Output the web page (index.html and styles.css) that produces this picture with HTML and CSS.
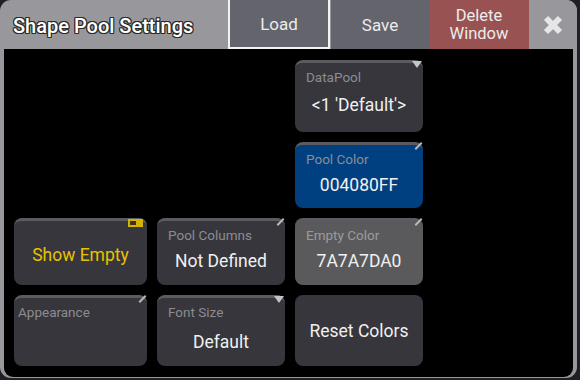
FILE: index.html
```html
<!DOCTYPE html>
<html lang="en">
<head>
    <meta charset="UTF-8">
    <title>Shape Pool Settings</title>
    <link rel="stylesheet" href="styles.css">
</head>
<body>
    <div class="window">
        <div class="titlebar">
            <div class="title">Shape Pool Settings</div>
            <button class="tb-btn load">Load</button>
            <button class="tb-btn save">Save</button>
            <button class="tb-btn delete">Delete<br>Window</button>
            <button class="tb-btn close">
                <svg width="24" height="24" viewBox="0 0 24 24">
                    <path d="M5 5 L19 19 M19 5 L5 19" stroke="#e6e6e6" stroke-width="6"/>
                </svg>
            </button>
        </div>

        <div class="content">
            <div class="grid">
                <div class="panel datapool">
                    <span class="mark tri"></span>
                    <div class="label">DataPool</div>
                    <div class="value">&lt;1 'Default'&gt;</div>
                </div>

                <div class="panel poolcolor">
                    <span class="mark pen"></span>
                    <div class="label">Pool Color</div>
                    <div class="value">004080FF</div>
                </div>

                <div class="panel showempty">
                    <span class="toggle"><span class="knob"></span></span>
                    <div class="big-yellow">Show Empty</div>
                </div>
                <div class="panel poolcolumns">
                    <span class="mark pen"></span>
                    <div class="label">Pool Columns</div>
                    <div class="value">Not Defined</div>
                </div>
                <div class="panel emptycolor">
                    <span class="mark pen"></span>
                    <div class="label">Empty Color</div>
                    <div class="value">7A7A7DA0</div>
                </div>

                <div class="panel appearance">
                    <span class="mark pen"></span>
                    <div class="label">Appearance</div>
                </div>
                <div class="panel fontsize">
                    <span class="mark tri"></span>
                    <div class="label">Font Size</div>
                    <div class="value">Default</div>
                </div>
                <div class="panel plain reset">
                    <div class="center">Reset Colors</div>
                </div>
            </div>
        </div>
    </div>
</body>
</html>
```

FILE: styles.css
```css
:root {
    --frame: #98989c;
    --btn: #63646c;
    --panel: #36363c;
    --strip: #5c5c60;
    --label: #8c8c92;
    --value: #f0f0f0;
}

body {
    margin: 0;
    background: #1e2026;
    font-family: Roboto, "Liberation Sans", sans-serif;
}

.window {
    width: 577px;
    height: 378px;
    background: var(--frame);
    border-radius: 11px;
    display: flex;
    flex-direction: column;
    overflow: hidden;
}

.titlebar {
    height: 49px;
    display: flex;
    align-items: stretch;
    flex-shrink: 0;
}

.title {
    flex: 1;
    padding-left: 13px;
    padding-top: 2px;
    display: flex;
    align-items: center;
    font-size: 20px;
    font-weight: 500;
    color: #ffffff;
    text-shadow: -1px -1px 0 #2a2a2a, 1px -1px 0 #2a2a2a, -1px 1px 0 #2a2a2a, 1px 1px 0 #2a2a2a,
                 0 1px 0 #2a2a2a, 0 -1px 0 #2a2a2a, 1px 0 0 #2a2a2a, -1px 0 0 #2a2a2a;
}

.tb-btn {
    border: none;
    margin: 0;
    padding: 0;
    font-family: inherit;
    color: #ececec;
    font-size: 17px;
    background: var(--btn);
}

.load {
    width: 102px;
    border: 2px solid #f2f2f2;
    border-top: none;
    margin-right: 1px;
}

.save {
    width: 98px;
}

.delete {
    width: 100px;
    background: #985252;
    font-size: 16.5px;
    line-height: 18px;
    padding-top: 1px;
}

.close {
    width: 48px;
    background: var(--frame);
    display: flex;
    align-items: center;
    justify-content: center;
}

.content {
    flex: 1;
    background: #000000;
    margin: 0 4px 3px 4px;
    border-radius: 0 0 9px 9px;
    padding: 11px 10px;
}

.grid {
    display: grid;
    grid-template-columns: 133px 128px 128px;
    grid-template-rows: 72px 66px 67px 71px;
    gap: 10px;
}

.panel {
    position: relative;
    background: var(--panel);
    border-radius: 8px;
    border-top: 3px solid var(--strip);
    box-sizing: border-box;
    display: flex;
    flex-direction: column;
    align-items: center;
}

.datapool {
    grid-column: 3;
    grid-row: 1;
}

.poolcolor {
    grid-column: 3;
    grid-row: 2;
    background: #004080;
}

.showempty {
    grid-column: 1;
    grid-row: 3;
    justify-content: center;
}

.poolcolumns {
    grid-column: 2;
    grid-row: 3;
}

.emptycolor {
    grid-column: 3;
    grid-row: 3;
    background: #5a5a5c;
}

.emptycolor .label {
    color: #9a9a9c;
}

.appearance {
    grid-column: 1;
    grid-row: 4;
    align-items: flex-start;
}

.appearance .label {
    padding-left: 4px;
}

.fontsize {
    grid-column: 2;
    grid-row: 4;
}

.fontsize .value {
    margin-top: 12px;
}

.reset {
    grid-column: 3;
    grid-row: 4;
}

.label {
    align-self: flex-start;
    padding: 6px 0 0 11px;
    font-size: 13.5px;
    color: var(--label);
}

.value {
    margin-top: 10px;
    font-size: 17.5px;
    color: var(--value);
}

.poolcolor .value,
.poolcolumns .value,
.emptycolor .value {
    margin-top: 8px;
}

.big-yellow {
    font-size: 17.5px;
    color: #e8c200;
    padding-top: 3px;
}

.plain {
    border-top: none;
    justify-content: center;
}

.center {
    font-size: 17.5px;
    color: var(--value);
}

.mark {
    position: absolute;
    top: -2px;
    right: 2px;
}

.tri {
    width: 0;
    height: 0;
    border-left: 5px solid transparent;
    border-right: 5px solid transparent;
    border-top: 7px solid #c4c4c8;
    right: 1px;
}

.pen {
    width: 9px;
    height: 2px;
    background: #b8b8bc;
    transform: rotate(-45deg);
    top: 0;
    right: 0;
}

.toggle {
    position: absolute;
    top: -2px;
    right: 4px;
    width: 15px;
    height: 8px;
    background: #d4b400;
    box-sizing: border-box;
    padding: 2px;
}

.knob {
    display: block;
    width: 6px;
    height: 4px;
    background: #3a3420;
}
```
